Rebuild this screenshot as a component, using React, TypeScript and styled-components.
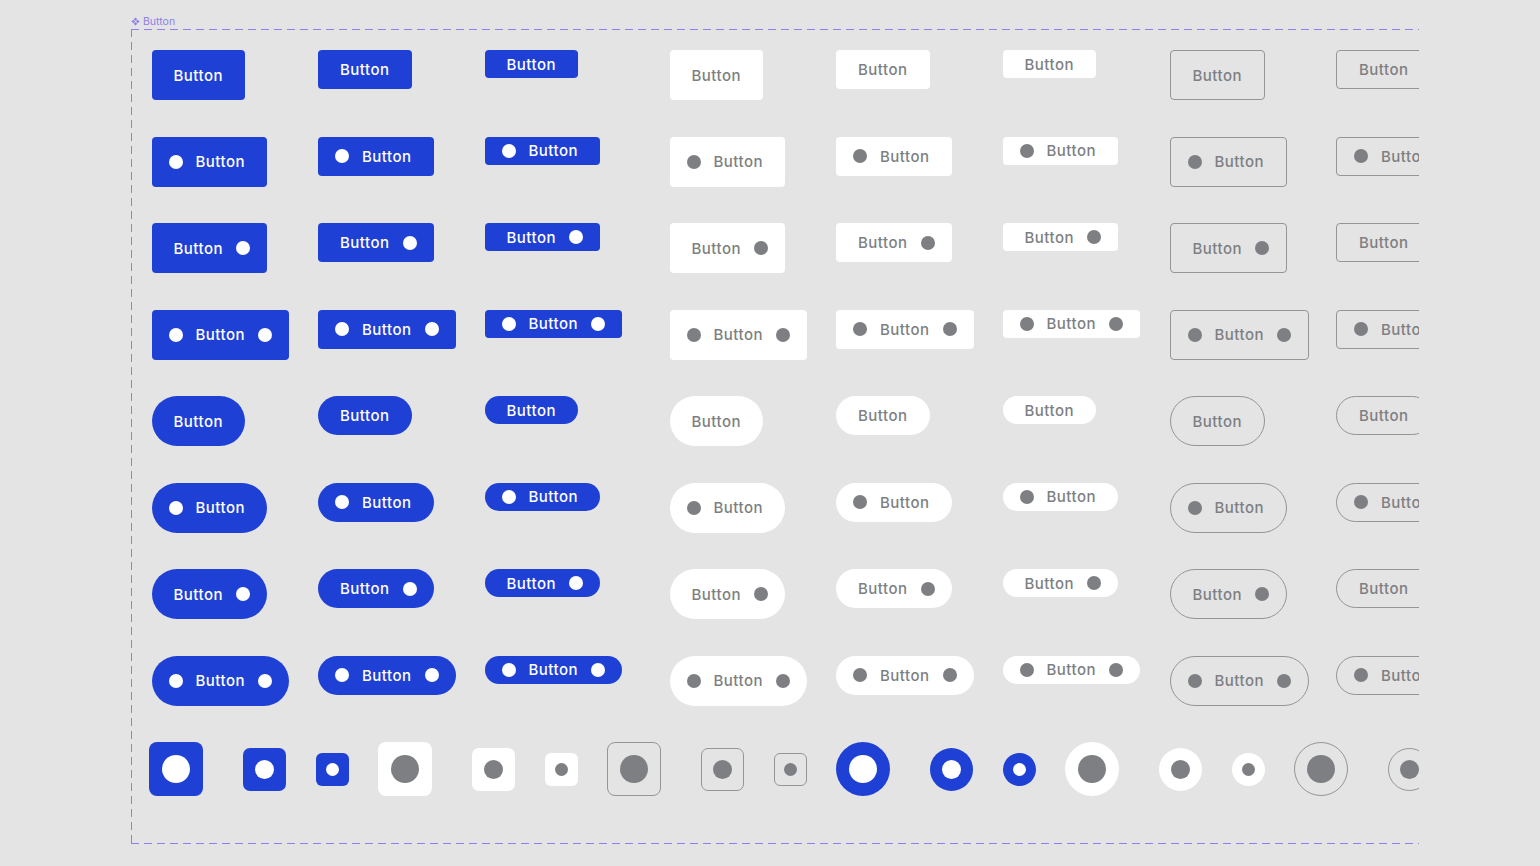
import styled, { createGlobalStyle, css } from "styled-components";

type Variant = "solid" | "white" | "outline";
type Size = "l" | "m" | "s";

const BLUE = "#1e40d4";
const GREY = "#7d7f82";
const DASH = "#8f80ec";

const GlobalStyle = createGlobalStyle`
	html, body {
		margin: 0;
		background: #e4e4e4;
	}
	body {
		font-family: Inter, "Noto Sans", sans-serif;
	}
`;

const heights: Record<Size, number> = { l: 50, m: 39, s: 28 };

const columns: { variant: Variant; size: Size }[] = [
	{ variant: "solid", size: "l" },
	{ variant: "solid", size: "m" },
	{ variant: "solid", size: "s" },
	{ variant: "white", size: "l" },
	{ variant: "white", size: "m" },
	{ variant: "white", size: "s" },
	{ variant: "outline", size: "l" },
	{ variant: "outline", size: "m" },
];

const rows = [
	{ pill: false, left: false, right: false },
	{ pill: false, left: true, right: false },
	{ pill: false, left: false, right: true },
	{ pill: false, left: true, right: true },
	{ pill: true, left: false, right: false },
	{ pill: true, left: true, right: false },
	{ pill: true, left: false, right: true },
	{ pill: true, left: true, right: true },
];

const iconGroups: { variant: Variant; round: boolean }[] = [
	{ variant: "solid", round: false },
	{ variant: "white", round: false },
	{ variant: "outline", round: false },
	{ variant: "solid", round: true },
	{ variant: "white", round: true },
	{ variant: "outline", round: true },
];

const variantStyles = {
	solid: css`
		background: ${BLUE};
		color: #ffffff;
		border: none;
	`,
	white: css`
		background: #ffffff;
		color: ${GREY};
		border: none;
	`,
	outline: css`
		background: transparent;
		color: ${GREY};
		border: 1px solid #959595;
	`,
};

const ComponentIcon = () => (
	<svg width="9" height="9" viewBox="0 0 10 10">
		<g fill={DASH}>
			<path d="M5 0.5 L7 2.5 L5 4.5 L3 2.5 Z" />
			<path d="M5 5.5 L7 7.5 L5 9.5 L3 7.5 Z" />
			<path d="M0.5 5 L2.5 3 L4.5 5 L2.5 7 Z" />
			<path d="M5.5 5 L7.5 3 L9.5 5 L7.5 7 Z" />
		</g>
	</svg>
);

const App = () => {
	return (
		<>
			<GlobalStyle />
			<Page>
				<FrameLabel>
					<ComponentIcon />
					Button
				</FrameLabel>
				<Frame>
					<ButtonGrid>
						{rows.map((row, r) =>
							columns.map((col, c) => (
								<Btn
									key={`${r}-${c}`}
									$variant={col.variant}
									$size={col.size}
									$pill={row.pill}
									$left={row.left}
									$right={row.right}
								>
									{row.left && <Dot $variant={col.variant} />}
									<BtnText>Button</BtnText>
									{row.right && <Dot $variant={col.variant} />}
								</Btn>
							)),
						)}
					</ButtonGrid>
					<IconRow>
						{iconGroups.map((g, i) => (
							<IconGroup key={i}>
								{(["l", "m", "s"] as Size[]).map((s) => (
									<IconBtn key={s} $variant={g.variant} $size={s} $round={g.round}>
										<InnerDot $variant={g.variant} $size={s} />
									</IconBtn>
								))}
							</IconGroup>
						))}
					</IconRow>
				</Frame>
			</Page>
		</>
	);
};

const Page = styled.div`
	padding: 14px 0 0 131px;
	height: 866px;
	box-sizing: border-box;
`;

const FrameLabel = styled.div`
	display: flex;
	align-items: center;
	gap: 3px;
	height: 15px;
	font-size: 10.5px;
	color: #8e80e6;
	font-family: Inter, sans-serif;
`;

const Frame = styled.div`
	width: 1288px;
	height: 815px;
	overflow: hidden;
	box-sizing: border-box;
	padding: 21px 0 0 20.5px;
	background-image:
		repeating-linear-gradient(90deg, ${DASH} 0 8px, transparent 8px 13px),
		repeating-linear-gradient(90deg, ${DASH} 0 8px, transparent 8px 13px),
		repeating-linear-gradient(180deg, ${DASH} 0 8px, transparent 8px 13px);
	background-size: 100% 1px, 100% 1px, 1px 100%;
	background-position: 0 0, 0 100%, 0 0;
	background-repeat: no-repeat;
`;

const ButtonGrid = styled.div`
	display: grid;
	grid-template-columns: 166.5px 166.5px 185px 166.5px 166.5px 167px 166.5px 166.5px;
	grid-auto-rows: 86.5px;
	align-items: start;
	justify-items: start;
	width: max-content;
`;

const Btn = styled.div<{
	$variant: Variant;
	$size: Size;
	$pill: boolean;
	$left: boolean;
	$right: boolean;
}>`
	display: flex;
	align-items: center;
	gap: 13px;
	box-sizing: border-box;
	height: ${(p) => heights[p.$size]}px;
	padding-left: ${(p) => (p.$left ? 17 : 22)}px;
	padding-right: ${(p) => (p.$right ? 17 : 22)}px;
	border-radius: ${(p) => (p.$pill ? "999px" : "4px")};
	white-space: nowrap;
	${(p) => variantStyles[p.$variant]}
`;

const BtnText = styled.span`
	font-size: 15px;
	font-weight: 500;
	letter-spacing: 0.5px;
	line-height: 1;
`;

const Dot = styled.span<{ $variant: Variant }>`
	flex: none;
	width: 14px;
	height: 14px;
	border-radius: 50%;
	background: ${(p) => (p.$variant === "solid" ? "#ffffff" : GREY)};
`;

const IconRow = styled.div`
	display: flex;
	margin-left: -2.5px;
	width: max-content;
`;

const IconGroup = styled.div`
	display: flex;
	align-items: center;
	width: 229px;
	height: 54px;

	& > :nth-child(1) {
		margin-right: 40px;
	}
	& > :nth-child(2) {
		margin-right: 30px;
	}
`;

const iconSizes: Record<Size, { box: number; dot: number; radius: number }> = {
	l: { box: 54, dot: 28, radius: 8 },
	m: { box: 43, dot: 19, radius: 7 },
	s: { box: 33, dot: 13, radius: 6 },
};

const IconBtn = styled.div<{ $variant: Variant; $size: Size; $round: boolean }>`
	flex: none;
	display: flex;
	align-items: center;
	justify-content: center;
	box-sizing: border-box;
	width: ${(p) => iconSizes[p.$size].box}px;
	height: ${(p) => iconSizes[p.$size].box}px;
	border-radius: ${(p) => (p.$round ? "50%" : `${iconSizes[p.$size].radius}px`)};
	${(p) => variantStyles[p.$variant]}
`;

const InnerDot = styled.span<{ $variant: Variant; $size: Size }>`
	width: ${(p) => iconSizes[p.$size].dot}px;
	height: ${(p) => iconSizes[p.$size].dot}px;
	border-radius: 50%;
	background: ${(p) => (p.$variant === "solid" ? "#ffffff" : GREY)};
`;

export default App;
